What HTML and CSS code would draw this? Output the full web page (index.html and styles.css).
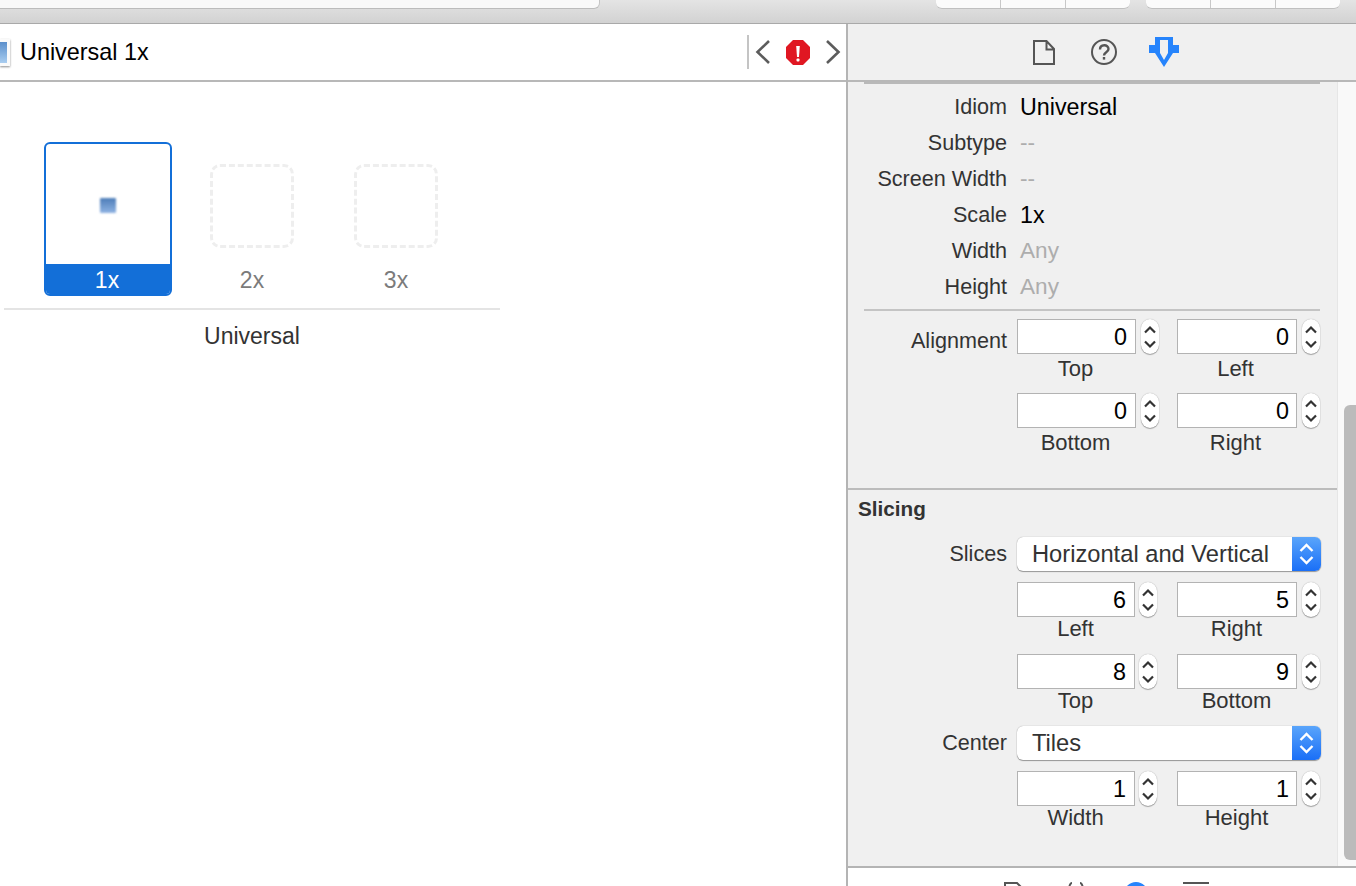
FILE: index.html
```html
<!DOCTYPE html>
<html lang="en">
<head>
    <meta charset="UTF-8">
    <title>Universal 1x</title>
    <link rel="stylesheet" href="styles.css">
</head>
<body>
    <svg class="defs" width="0" height="0">
        <symbol id="stepper" viewBox="0 0 18 35">
            <path d="M4 13.500 9 8.500 14 13.500M4 22.500 9 27.500 14 22.500" fill="none" stroke="#333" stroke-width="2.200"/>
        </symbol>
        <symbol id="popup-arrows" viewBox="0 0 29 34">
            <path d="M8.500 14 14.500 8 20.500 14M8.500 20 14.500 26 20.500 20" fill="none" stroke="#fff" stroke-width="2.400"/>
        </symbol>
    </svg>

    <header class="toolbar">
        <div class="toolbar-tab"></div>
        <div class="toolbar-group">
            <span class="seg seg-first"></span><span class="seg seg-mid"></span><span class="seg seg-last"></span>
        </div>
        <div class="toolbar-group">
            <span class="seg seg-first"></span><span class="seg seg-mid"></span><span class="seg seg-last"></span>
        </div>
    </header>

    <div class="workspace">
        <main class="editor">
            <div class="jump-bar">
                <span class="file-thumb"><span class="file-thumb-inner"></span></span>
                <span class="jump-title">Universal 1x</span>
                <span class="jump-nav">
                    <svg class="nav-icon" width="16" height="26" viewBox="0 0 16 26"><path d="M14 2 2.500 13 14 24" fill="none" stroke="#5c5c5c" stroke-width="2.600"/></svg>
                    <svg class="nav-error" width="24" height="25" viewBox="0 0 24 25">
                        <path d="M7 0h10l7 7v11l-7 7H7l-7-7V7z" fill="#e01722"/>
                        <path d="M10.200 6h3.600l-.8 11h-2z" fill="#fff"/>
                        <rect x="10.500" y="18.500" width="3" height="3" rx="1" fill="#fff"/>
                    </svg>
                    <svg class="nav-icon" width="16" height="26" viewBox="0 0 16 26"><path d="M2 2 13.500 13 2 24" fill="none" stroke="#5c5c5c" stroke-width="2.600"/></svg>
                </span>
            </div>

            <section class="image-set">
                <div class="slots">
                    <div class="slot-active">
                        <div class="slot-preview"><span class="slot-image"></span></div>
                        <div class="slot-name">1x</div>
                    </div>
                    <div class="slot-empty">
                        <span class="slot-dashed"></span>
                        <span class="slot-label">2x</span>
                    </div>
                    <div class="slot-empty">
                        <span class="slot-dashed"></span>
                        <span class="slot-label">3x</span>
                    </div>
                </div>
                <div class="set-name">Universal</div>
            </section>
        </main>

        <aside class="inspector">
            <div class="inspector-tabs">
                <svg class="tab-file" width="22" height="25" viewBox="0 0 22 25"><path d="M1 1h12.500l7.500 8v15H1zM13.500 1v8.500H21" fill="none" stroke="#555" stroke-width="2"/></svg>
                <svg width="26" height="26" viewBox="0 0 26 26">
                    <circle cx="13" cy="13" r="12" fill="none" stroke="#555" stroke-width="2"/>
                    <path d="M9 10.500c0-5.500 8.500-5.500 8.500-.5 0 3.500-4.500 3-4.500 6.500" fill="none" stroke="#555" stroke-width="2.400"/>
                    <rect x="11.800" y="18" width="2.400" height="2.600" fill="#555"/>
                </svg>
                <svg width="30" height="30" viewBox="0 0 30 30"><path fill-rule="evenodd" d="M6 0H24V8H30V16H24L15 30 6 16H0V8H6ZM11 3V16L15 23 19 16V3Z" fill="#2684fc"/></svg>
            </div>

            <div class="inspector-body">
                <div class="inspector-content">
                    <hr class="rule rule-top">
                    <div class="info-row"><span class="label">Idiom</span><span class="value">Universal</span></div>
                    <div class="info-row"><span class="label">Subtype</span><span class="value value-off">--</span></div>
                    <div class="info-row"><span class="label">Screen Width</span><span class="value value-off">--</span></div>
                    <div class="info-row"><span class="label">Scale</span><span class="value">1x</span></div>
                    <div class="info-row"><span class="label">Width</span><span class="value value-off">Any</span></div>
                    <div class="info-row"><span class="label">Height</span><span class="value value-off">Any</span></div>
                    <hr class="rule rule-mid">

                    <div class="form-row">
                        <span class="label label-field">Alignment</span>
                        <div class="field-grid">
                            <div class="field"><div class="field-line"><span class="input">0</span><svg class="stepper"><use href="#stepper"/></svg></div><span class="caption">Top</span></div>
                            <div class="field"><div class="field-line"><span class="input">0</span><svg class="stepper"><use href="#stepper"/></svg></div><span class="caption">Left</span></div>
                            <div class="field"><div class="field-line"><span class="input">0</span><svg class="stepper"><use href="#stepper"/></svg></div><span class="caption">Bottom</span></div>
                            <div class="field"><div class="field-line"><span class="input">0</span><svg class="stepper"><use href="#stepper"/></svg></div><span class="caption">Right</span></div>
                        </div>
                    </div>

                    <div class="slicing">
                        <h3 class="section-title">Slicing</h3>
                        <div class="form-row">
                            <span class="label label-popup">Slices</span>
                            <div class="popup"><span class="popup-text">Horizontal and Vertical</span><span class="popup-btn"><svg width="29" height="34"><use href="#popup-arrows"/></svg></span></div>
                        </div>
                        <div class="form-row form-row-tight">
                            <span class="label"></span>
                            <div class="field-grid field-grid-tight">
                                <div class="field"><div class="field-line"><span class="input">6</span><svg class="stepper"><use href="#stepper"/></svg></div><span class="caption">Left</span></div>
                                <div class="field"><div class="field-line"><span class="input">5</span><svg class="stepper"><use href="#stepper"/></svg></div><span class="caption">Right</span></div>
                                <div class="field"><div class="field-line"><span class="input">8</span><svg class="stepper"><use href="#stepper"/></svg></div><span class="caption">Top</span></div>
                                <div class="field"><div class="field-line"><span class="input">9</span><svg class="stepper"><use href="#stepper"/></svg></div><span class="caption">Bottom</span></div>
                            </div>
                        </div>
                        <div class="form-row form-row-center">
                            <span class="label label-popup">Center</span>
                            <div class="popup"><span class="popup-text">Tiles</span><span class="popup-btn"><svg width="29" height="34"><use href="#popup-arrows"/></svg></span></div>
                        </div>
                        <div class="form-row form-row-tight">
                            <span class="label"></span>
                            <div class="field-grid field-grid-tight">
                                <div class="field"><div class="field-line"><span class="input">1</span><svg class="stepper"><use href="#stepper"/></svg></div><span class="caption">Width</span></div>
                                <div class="field"><div class="field-line"><span class="input">1</span><svg class="stepper"><use href="#stepper"/></svg></div><span class="caption">Height</span></div>
                            </div>
                        </div>
                    </div>
                </div>
                <div class="gutter"><span class="gutter-thumb"></span></div>
            </div>

            <div class="library-tabs">
                <svg width="20" height="24" viewBox="0 0 20 24"><path d="M1 1h12l6 6v16H1z" fill="none" stroke="#555" stroke-width="2"/></svg>
                <svg width="20" height="24" viewBox="0 0 20 24"><path d="M6 1C2 1 4 10 1 12c3 2 1 11 5 11M14 1c4 0 2 9 5 11-3 2-1 11-5 11" fill="none" stroke="#555" stroke-width="2"/></svg>
                <svg width="24" height="24" viewBox="0 0 24 24"><circle cx="12" cy="12" r="10" fill="none" stroke="#2684fc" stroke-width="4"/></svg>
                <svg width="26" height="24" viewBox="0 0 26 24"><path d="M0 1h26" fill="none" stroke="#555" stroke-width="2"/><path d="M0 8h26" fill="none" stroke="#555" stroke-width="2"/></svg>
            </div>
        </aside>
    </div>
</body>
</html>
```

FILE: styles.css
```css
* {
    box-sizing: border-box;
}
html, body {
    margin: 0;
    padding: 0;
    height: 886px;
    overflow: hidden;
}
body {
    font-family: "Liberation Sans", Arial, sans-serif;
    font-size: 21.6px;
    color: #333;
    background-color: #fff;
    display: flex;
    flex-direction: column;
}
.defs {
    position: absolute;
}

/* top toolbar */
.toolbar {
    height: 24px;
    flex: none;
    display: flex;
    align-items: flex-start;
    background: linear-gradient(#e4e4e4, #d2d2d2);
    border-bottom: 1px solid #a9a9a9;
}
.toolbar-tab {
    width: 600px;
    height: 9px;
    background-color: #f9f9f9;
    border-bottom: 1px solid #bcbcbc;
    border-right: 1px solid #c4c4c4;
    border-bottom-right-radius: 6px;
    margin-right: 336px;
}
.toolbar-group {
    display: flex;
    width: 194px;
    height: 9px;
    margin-right: 16px;
    background-color: #fbfbfb;
    border-bottom: 1px solid #c0c0c0;
    border-radius: 0 0 6px 6px;
}
.seg {
    height: 8px;
    border-right: 1px solid #c8c8c8;
}
.seg-first {
    width: 65px;
}
.seg-mid {
    width: 65px;
}
.seg-last {
    flex: 1;
    border-right: none;
}

.workspace {
    flex: 1;
    display: flex;
    min-height: 0;
}

/* left side */
.editor {
    width: 848px;
    flex: none;
    border-right: 2px solid #b4b4b4;
}
.jump-bar {
    height: 58px;
    display: flex;
    align-items: center;
    border-bottom: 2px solid #b8b8b8;
}
.file-thumb {
    width: 10px;
    height: 27px;
    padding: 3px 3px 3px 0;
    background-color: #fafafa;
    box-shadow: 0 1px 2px rgba(0, 0, 0, 0.45);
    margin-right: 10px;
}
.file-thumb-inner {
    display: block;
    height: 100%;
    background: linear-gradient(#5b8fcb, #a9cdf0);
}
.jump-title {
    font-size: 23.4px;
    color: #000;
    flex: 1;
}
.jump-nav {
    height: 34px;
    width: 96px;
    display: flex;
    align-items: center;
    border-left: 2px solid #c4c4c4;
    padding-left: 6px;
    margin-right: 3px;
    flex: none;
}
.nav-error {
    margin: 0 15px;
}

.image-set {
    width: 496px;
    margin-left: 4px;
    padding-top: 60px;
}
.slots {
    display: flex;
    align-items: flex-start;
    height: 168px;
    padding-left: 40px;
    border-bottom: 2px solid #e4e4e4;
}
.slot-active {
    width: 128px;
    height: 154px;
    border: 2px solid #136fd8;
    border-radius: 6px;
    overflow: hidden;
    display: flex;
    flex-direction: column;
    margin-right: 38px;
}
.slot-preview {
    height: 120px;
    flex: none;
    display: flex;
    align-items: center;
    justify-content: center;
    padding-top: 3px;
}
.slot-image {
    width: 16px;
    height: 15px;
    border-radius: 1px;
    background: linear-gradient(#4d7db8, #8fb3e3);
    filter: blur(1px);
}
.slot-name {
    height: 30px;
    flex: none;
    background-color: #136fd8;
    color: #fff;
    text-align: center;
    line-height: 32px;
    font-size: 23px;
    padding-right: 2px;
}
.slot-empty {
    width: 84px;
    margin-right: 60px;
    padding-top: 22px;
    display: flex;
    flex-direction: column;
    align-items: center;
}
.slot-dashed {
    width: 84px;
    height: 84px;
    border: 3px dashed #eeeeee;
    border-radius: 10px;
}
.slot-label {
    font-size: 23px;
    color: #7b7b7b;
    line-height: 26px;
    margin-top: 19px;
}
.set-name {
    text-align: center;
    line-height: 26px;
    margin-top: 13px;
    font-size: 23px;
}

/* inspector */
.inspector {
    flex: 1;
    display: flex;
    flex-direction: column;
    background-color: #f0f0f0;
    min-width: 0;
}
.inspector-tabs {
    height: 58px;
    flex: none;
    display: flex;
    align-items: center;
    justify-content: center;
    gap: 32px;
    padding-left: 8px;
    border-bottom: 2px solid #b8b8b8;
}
.tab-file {
    margin-right: 4px;
}
.inspector-body {
    flex: 1;
    display: flex;
    min-height: 0;
}
.inspector-content {
    flex: 1;
    min-width: 0;
}
.gutter {
    width: 19px;
    flex: none;
    padding: 323px 0 6px 6px;
    background-color: #f9f9f9;
    border-left: 1px solid #e6e6e6;
    display: flex;
}
.gutter-thumb {
    flex: 1;
    background-color: #bbbbbb;
    border-radius: 6px 0 0 6px;
}
.rule {
    height: 2px;
    border: none;
    margin: 0 17px 0 16px;
    background-color: #b9b9b9;
}
.rule-mid {
    margin-top: 4px;
    background-color: #c4c4c4;
}
.info-row {
    height: 36px;
    display: flex;
    align-items: center;
    gap: 13px;
}
.rule-top {
    margin-bottom: 5px;
}
.label {
    width: 159px;
    flex: none;
    text-align: right;
}
.value {
    font-size: 23.300px;
    color: #000;
}
.value-off {
    font-size: 22.600px;
    color: #adadad;
}
.form-row {
    display: flex;
    gap: 10px;
}
.inspector-content > .form-row {
    margin-top: 8px;
}
.label-field {
    line-height: 43px;
}
.label-popup {
    line-height: 34px;
}
.field-grid {
    display: grid;
    grid-template-columns: 160px 144px;
    row-gap: 9px;
}
.field-grid-tight {
    row-gap: 14px;
}
.field {
    display: flex;
    flex-direction: column;
}
.field-line {
    display: flex;
    gap: 5px;
}
.input {
    width: 119px;
    height: 35px;
    background-color: #fff;
    border: 1px solid #b3b3b3;
    color: #000;
    font-size: 23.400px;
    line-height: 35px;
    text-align: right;
    padding-right: 8px;
}
.field:nth-child(even) .input {
    width: 120px;
    padding-right: 7px;
}
.field-grid-tight .field:nth-child(odd) .input {
    width: 118px;
}
.field-grid-tight .field:nth-child(odd) .field-line {
    gap: 4px;
}
.stepper {
    width: 18px;
    height: 35px;
    flex: none;
    background-color: #fff;
    border-radius: 9px;
    box-shadow: 0 1px 1px rgba(0, 0, 0, 0.3), 0 0 1px rgba(0, 0, 0, 0.35);
}
.caption {
    width: 117px;
    text-align: center;
    line-height: 30px;
    font-size: 22px;
}
.field:nth-child(even) .caption {
    width: 117px;
}
.field-grid-tight .caption {
    line-height: 23px;
}
.field-grid-tight .field:nth-child(even) .caption {
    width: 119px;
}
.slicing {
    margin-top: 30px;
    border-top: 2px solid #bcbcbc;
    padding-top: 7px;
}
.section-title {
    font-size: 20.700px;
    margin: 0 0 16px 10px;
    line-height: 24px;
}
.popup {
    width: 304px;
    height: 34px;
    display: flex;
    background-color: #fff;
    border-radius: 6px;
    overflow: hidden;
    box-shadow: 0 1px 1px rgba(0, 0, 0, 0.35), 0 0 1px rgba(0, 0, 0, 0.4);
}
.popup-text {
    flex: 1;
    font-size: 23.700px;
    line-height: 34px;
    padding-left: 15px;
}
.popup-btn {
    width: 29px;
    display: flex;
    background: linear-gradient(#5aa5fb, #1a6ff7);
}
.form-row-tight {
    margin-top: 11px;
}
.form-row-center {
    margin-top: 14px;
}
.library-tabs {
    height: 20px;
    flex: none;
    display: flex;
    background-color: #fff;
    border-top: 2px solid #b4b4b4;
    padding: 14px 0 0 156px;
    gap: 42px;
    overflow: hidden;
}
.library-tabs svg {
    flex: none;
}
.library-tabs svg:nth-child(3) {
    margin-left: -4px;
}
.library-tabs svg:nth-child(4) {
    margin-left: -7px;
}
```
